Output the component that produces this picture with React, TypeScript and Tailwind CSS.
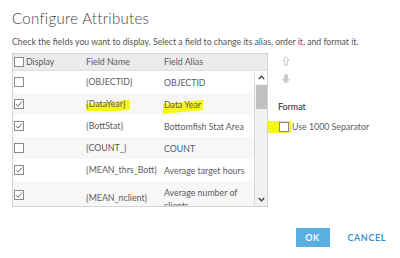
import React from "react";

type Row = { name: string; alias: string; checked: boolean; mark?: boolean; tall?: boolean };

const rows: Row[] = [
  { name: "{OBJECTID}", alias: "OBJECTID", checked: false },
  { name: "{DataYear}", alias: "Data Year", checked: true, mark: true },
  { name: "{BottStat}", alias: "Bottomfish Stat Area", checked: true },
  { name: "{COUNT_}", alias: "COUNT", checked: false },
  { name: "{MEAN_thrs_Bott}", alias: "Average target hours", checked: true },
  { name: "{MEAN_nclient}", alias: "Average number of clients", checked: true, tall: true },
];

const Box = ({ checked }: { checked: boolean }) => (
  <span className="inline-flex w-[10px] h-[10px] border border-[#8a8a8a] bg-white items-center justify-center shrink-0">
    {checked && (
      <svg width="8" height="8" viewBox="0 0 8 8">
        <path d="M1 4.2 L3 6.2 L7 1.5" fill="none" stroke="#666" strokeWidth="1" />
      </svg>
    )}
  </span>
);

const App = () => {
  return (
    <div
      className="w-[400px] h-[258px] bg-white text-[#5c5c5c] overflow-hidden flex flex-col"
      style={{ fontFamily: "Lato, 'Open Sans', sans-serif" }}
    >
      <h1 className="ml-3 mt-[9px] text-[15px] leading-[19px] font-light text-[#444] tracking-[0.3px]">
        Configure Attributes
      </h1>
      <p className="ml-3 mt-[8px] text-[8.7px] leading-[12px] text-[#555]">
        Check the fields you want to display. Select a field to change its alias, order it, and format it.
      </p>

      <div className="flex mt-[5px] ml-3">
        {/* table */}
        <div className="w-[256px] h-[154px] border border-[#d4d4d4] flex flex-col text-[8.8px]">
          <div className="h-[17px] bg-[#ebebeb] flex items-center shrink-0 border-b border-[#e0e0e0]">
            <div className="w-[73px] flex items-center gap-[2px] pl-[1px]">
              <Box checked={false} />
              <span>Display</span>
            </div>
            <div className="w-[78px]">Field Name</div>
            <div>Field Alias</div>
          </div>
          <div className="flex flex-1 overflow-hidden">
            <div className="flex-1 overflow-hidden">
              {rows.map((r, i) => (
                <div
                  key={r.name}
                  className={`flex ${r.tall ? "h-[30px] items-start pt-[5px]" : "h-[22px] items-center"} ${
                    i % 2 === 1 ? "bg-[#f7f7f7]" : "bg-white"
                  }`}
                >
                  <div className={`w-[73px] pl-[1px] flex ${r.tall ? "pt-[4px]" : ""}`}>
                    <Box checked={r.checked} />
                  </div>
                  <div className={`w-[78px] whitespace-nowrap overflow-hidden ${r.tall ? "pt-[5px]" : ""}`}>
                    {r.mark ? (
                      <span className="relative inline-block">
                        <span className="absolute left-[-1px] right-[-5px] top-[5px] bottom-[-2px] bg-[#f6f61c] -skew-y-6" />
                        <span className="relative">{r.name}</span>
                      </span>
                    ) : (
                      r.name
                    )}
                  </div>
                  <div className="flex-1 leading-[13px]">
                    {r.mark ? (
                      <span className="relative inline-block">
                        <span className="absolute left-[-1px] right-[-2px] top-[4px] bottom-[-1px] bg-[#f6f61c] -skew-y-6" />
                        <span className="relative">{r.alias}</span>
                      </span>
                    ) : (
                      r.alias
                    )}
                  </div>
                </div>
              ))}
            </div>
            {/* scrollbar */}
            <div className="w-[13px] bg-[#f1f1f1] border-l border-[#dcdcdc] flex flex-col items-center">
              <div className="h-[13px] w-full flex items-center justify-center bg-white">
                <svg width="7" height="5" viewBox="0 0 7 5">
                  <path d="M0.8 4 L3.5 1.2 L6.2 4" fill="none" stroke="#333" strokeWidth="1.2" />
                </svg>
              </div>
              <div className="w-[11px] h-[24px] bg-[#c1c1c1] mt-[1px]" />
              <div className="flex-1" />
              <div className="h-[13px] w-full flex items-center justify-center">
                <svg width="7" height="5" viewBox="0 0 7 5">
                  <path d="M0.8 1 L3.5 3.8 L6.2 1" fill="none" stroke="#333" strokeWidth="1.2" />
                </svg>
              </div>
            </div>
          </div>
        </div>

        {/* order arrows + format */}
        <div className="ml-[10px] flex flex-col text-[8.8px]">
          <div className="w-[10px] ml-[3px] flex flex-col items-center gap-[8px] pt-[3px]">
            <svg width="8" height="10" viewBox="0 0 8 10">
              <path d="M4 0.8 L7.2 4.5 L5.3 4.5 L5.3 9.2 L2.7 9.2 L2.7 4.5 L0.8 4.5 Z" fill="none" stroke="#c4c4c4" strokeWidth="0.9" />
            </svg>
            <svg width="8" height="10" viewBox="0 0 8 10">
              <path d="M4 9.2 L7.2 5.5 L5.3 5.5 L5.3 0.8 L2.7 0.8 L2.7 5.5 L0.8 5.5 Z" fill="#d0d0d0" stroke="#c4c4c4" strokeWidth="0.9" />
            </svg>
          </div>
          <div className="font-semibold text-[#444] mt-[16px]">Format</div>
          <div className="flex items-center mt-[7px]">
            <span className="bg-[#f6f61c] pl-[11px] pr-[2px] py-[1px] -ml-[10px] flex">
              <Box checked={false} />
            </span>
            <span className="ml-[1px]">Use 1000 Separator</span>
          </div>
        </div>
      </div>

      <div className="flex justify-end items-center mt-[21px] pr-[14px] gap-[18px]">
        <button className="w-[34px] h-[19px] bg-[#5aaee0] text-white text-[9px] font-semibold tracking-[0.5px]">
          OK
        </button>
        <button className="text-[#2d8ac9] text-[9px] font-semibold tracking-[0.6px]">CANCEL</button>
      </div>
    </div>
  );
};

export default App;
